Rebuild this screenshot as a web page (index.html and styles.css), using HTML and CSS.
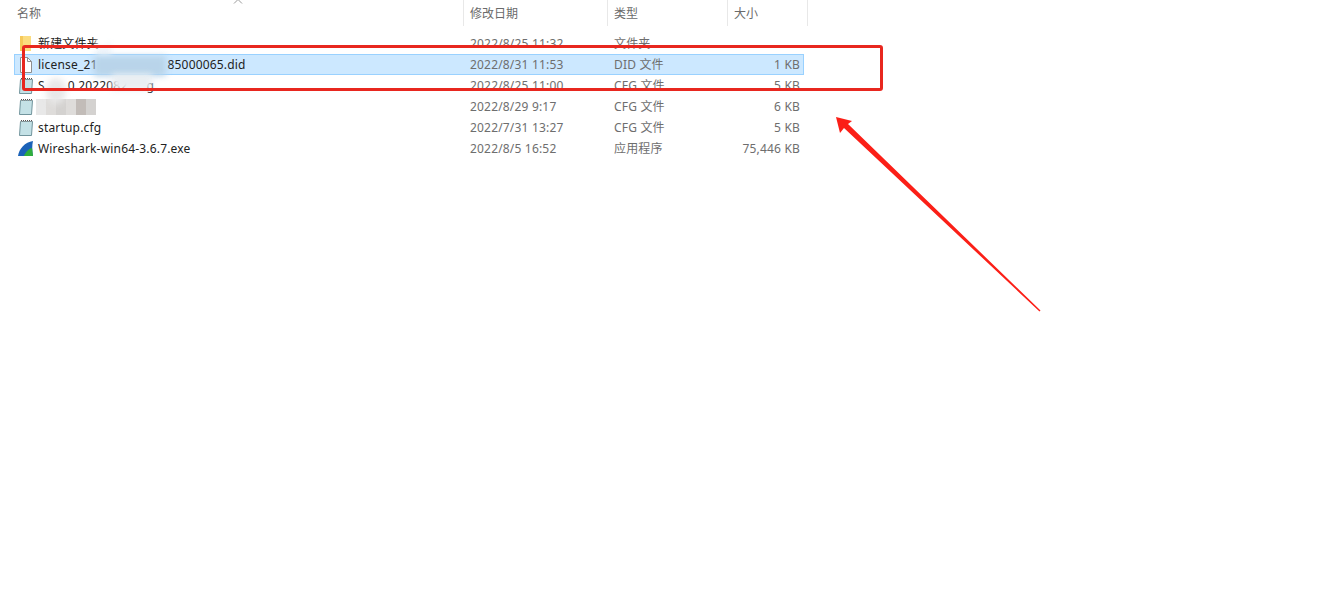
FILE: index.html
```html
<!DOCTYPE html>
<html lang="zh">
<head>
<meta charset="utf-8">
<title>文件列表</title>
<link rel="stylesheet" href="styles.css">
</head>
<body>
<div class="explorer">
  <div class="head">
    <div class="hcell c-name">名称
      <svg class="sort" width="10" height="5" viewBox="0 0 10 5"><path d="M1 4.500 5 .5l4 4" fill="none" stroke="#9a9a9a"/></svg>
    </div>
    <div class="hcell c-date">修改日期</div>
    <div class="hcell c-type">类型</div>
    <div class="hcell c-size">大小</div>
  </div>
  <div class="list">
    <div class="row">
      <div class="cell c-name">
        <svg class="ico" width="16" height="16" viewBox="0 0 16 16"><path d="M2 0h11v15H2z" fill="#fbdc7f"/><path d="M2 0h3v15H2z" fill="#f6c95a"/></svg>
        <span>新建文件夹</span>
      </div>
      <div class="cell c-date">2022/8/25 11:32</div>
      <div class="cell c-type">文件夹</div>
      <div class="cell c-size"></div>
    </div>
    <div class="row selected">
      <div class="cell c-name">
        <svg class="ico" width="16" height="16" viewBox="0 0 16 16"><path d="M2.500.5h7l4 4v11h-11z" fill="#fff" stroke="#8e8e8e"/><path d="M9.500.5v4h4" fill="none" stroke="#8e8e8e"/></svg>
        <span>license_21<i class="gap-a"></i>85000065.did</span>
      </div>
      <div class="cell c-date">2022/8/31 11:53</div>
      <div class="cell c-type">DID 文件</div>
      <div class="cell c-size">1 KB</div>
    </div>
    <div class="row">
      <div class="cell c-name">
        <svg class="ico" width="16" height="16" viewBox="0 0 16 16"><use href="#note"/></svg>
        <span>S<i class="gap-b"></i>0 2022082<i class="gap-c"></i>g</span>
      </div>
      <div class="cell c-date">2022/8/25 11:00</div>
      <div class="cell c-type">CFG 文件</div>
      <div class="cell c-size">5 KB</div>
    </div>
    <div class="row">
      <div class="cell c-name">
        <svg class="ico" width="16" height="16" viewBox="0 0 16 16"><use href="#note"/></svg>
        <span class="mosaic"><i class="m1"></i><i class="m2"></i><i class="m3"></i><i class="m2"></i><i class="m4"></i><i class="m3"></i></span>
      </div>
      <div class="cell c-date">2022/8/29 9:17</div>
      <div class="cell c-type">CFG 文件</div>
      <div class="cell c-size">6 KB</div>
    </div>
    <div class="row">
      <div class="cell c-name">
        <svg class="ico" width="16" height="16" viewBox="0 0 16 16">
          <defs>
            <g id="note">
              <path d="M2.500 1.500h12l-1 14h-12z" fill="#c4e1e6" stroke="#71949c"/>
              <path d="M3 .5h11" stroke="#555" stroke-dasharray="1 1"/>
              <path d="M3 1.500h11" stroke="#999" stroke-dasharray="1 1"/>
            </g>
          </defs>
          <use href="#note"/>
        </svg>
        <span>startup.cfg</span>
      </div>
      <div class="cell c-date">2022/7/31 13:27</div>
      <div class="cell c-type">CFG 文件</div>
      <div class="cell c-size">5 KB</div>
    </div>
    <div class="row">
      <div class="cell c-name">
        <svg class="ico" width="16" height="16" viewBox="0 0 16 16"><path d="M0 15C1 8 7 1 15 0c-1 4-1 9 0 15z" fill="#1b62b8"/><path d="M6 15c1-3 4-7 8-8l1 8z" fill="#2fae3c"/></svg>
        <span>Wireshark-win64-3.6.7.exe</span>
      </div>
      <div class="cell c-date">2022/8/5 16:52</div>
      <div class="cell c-type">应用程序</div>
      <div class="cell c-size">75,446 KB</div>
    </div>
  </div>
  <div class="patch p1"></div>
  <div class="patch p2"></div>
  <div class="patch p3"></div>
  <div class="patch p4"></div>
  <div class="patch p5"></div>
  <div class="frame"></div>
  <svg class="arrow" width="1343" height="616" viewBox="0 0 1343 616"><path d="M836 117L852 121L848 124L1040.500 310.500L1039.500 311.500L844 128L840 133z" fill="#fb1f17"/></svg>
</div>
</body>
</html>
```
FILE: styles.css
```css
* { box-sizing: border-box; }
html, body { margin: 0; background: #fff; }
.explorer {
  position: relative;
  width: 1343px;
  height: 616px;
  overflow: hidden;
  font-family: "Noto Sans", "Noto Sans CJK SC", sans-serif;
  font-size: 12px;
  color: #6e6e6e;
}
.head {
  display: flex;
  height: 26px;
  width: 808px;
  padding-left: 14px;
}
.hcell {
  position: relative;
  display: flex;
  align-items: center;
  height: 26px;
  padding-left: 6px;
  padding-bottom: 1px;
  border-right: 1px solid #e8e8e8;
  color: #6a6a6a;
}
.hcell.c-name { padding-left: 3px; }
.sort { position: absolute; left: 219px; top: -1px; }
.c-name { width: 450px; }
.c-date { width: 144px; }
.c-type { width: 120px; }
.c-size { width: 80px; }
.list {
  margin-top: 7px;
  margin-left: 14px;
  width: 790px;
}
.row {
  display: flex;
  height: 21px;
  align-items: center;
  border: 1px solid transparent;
}
.row.selected { background: #cce8ff; border-color: #99d1ff; }
.cell {
  padding-left: 6px;
  white-space: nowrap;
  line-height: 18px;
  letter-spacing: 0.18px;
}
.cell.c-name {
  display: flex;
  align-items: center;
  width: 449px;
  padding-left: 3px;
  color: #222;
}
.cell.c-size {
  width: 75px;
  padding: 0 3px 0 0;
  text-align: right;
}
.ico { flex: none; margin-right: 4px; }
.gap-a { display: inline-block; width: 70px; }
.gap-b { display: inline-block; width: 23px; }
.gap-c { display: inline-block; width: 19px; }
.mosaic { display: flex; height: 16px; margin-left: -2px; filter: blur(.6px); }
.mosaic i { display: block; width: 10px; height: 16px; }
.m1 { background: #e8e8e8; }
.m2 { background: #dedcda; }
.m3 { background: #d4d2d0; }
.m4 { background: #c2bcb8; }
.patch { position: absolute; filter: blur(3px); }
.p1 { left: 97px; top: 44px; width: 14px; height: 12px; background: #eef5fb; }
.p2 { left: 94px; top: 56px; width: 72px; height: 20px; background: #b9d4ea; }
.p3 { left: 112px; top: 74px; width: 40px; height: 16px; background: #e9eef2; }
.p4 { left: 46px; top: 78px; width: 20px; height: 26px; background: #e8e8e8; border-radius: 50%; }
.p5 { left: 97px; top: 34px; width: 10px; height: 12px; background: #fff; }
.frame {
  position: absolute;
  left: 22px;
  top: 45px;
  width: 861px;
  height: 46px;
  border: 3px solid #e8271f;
  border-radius: 3px;
}
.arrow { position: absolute; left: 0; top: 0; }
```
